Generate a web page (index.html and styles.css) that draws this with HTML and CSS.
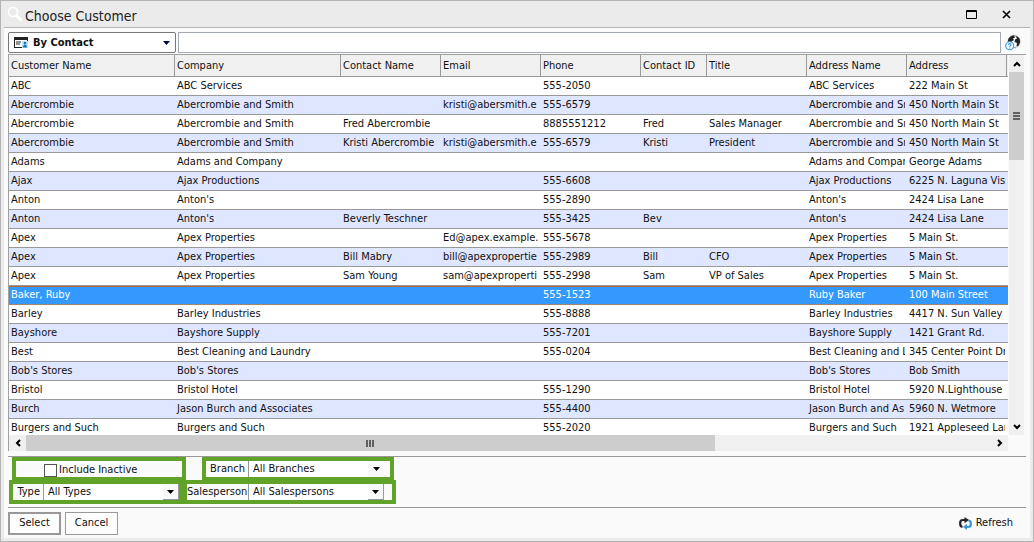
FILE: index.html
```html
<!DOCTYPE html>
<html lang="en">
<head>
<meta charset="utf-8">
<title>Choose Customer</title>
<link rel="stylesheet" href="styles.css">
</head>
<body>
<div class="window">
  <header class="titlebar">
    <svg class="title-icon" viewBox="0 0 16 16" width="16" height="16" aria-hidden="true"><circle cx="6" cy="6" r="4.5" fill="none" stroke="#fff" stroke-width="1.6"/><path d="M9.5 9.5L14 14" stroke="#fff" stroke-width="2.6" stroke-linecap="round"/></svg>
    <h1 class="title">Choose Customer</h1>
    <button class="win-btn" aria-label="Maximize"><svg viewBox="0 0 11 9" width="11" height="9"><path d="M0.5 0.5h10v8h-10zM0 1.5h11" fill="none" stroke="#000"/></svg></button>
    <button class="win-btn" aria-label="Close"><svg viewBox="0 0 9 9" width="9" height="9"><path d="M1 1l7 7M8 1l-7 7" stroke="#000" stroke-width="1.6"/></svg></button>
  </header>
  <main class="content">
    <div class="toolbar">
      <div class="mode">
        <svg class="mode-icon" viewBox="0 0 14 11" width="14" height="11" aria-hidden="true"><path d="M0 0h14v11H0z" fill="#222"/><path d="M1 3h12v7H1z" fill="#fff"/><path d="M2 5h5M2 7h4" stroke="#222"/><path d="M8 4h6v7H8z" fill="#bfe0f5"/><circle cx="11" cy="6" r="1.3" fill="#1b75b8"/><path d="M9 10.5c0-4 4-4 4 0z" fill="#1b75b8"/></svg>
        <select class="mode-select" aria-label="Search mode"><option>By Contact</option></select>
        <svg class="arrow" viewBox="0 0 7 4" width="7" height="4" aria-hidden="true"><path d="M0 0h7L3.5 4z" fill="#000050"/></svg>
      </div>
      <input class="search" type="text" aria-label="Search">
      <button class="globe" aria-label="Web help"><svg viewBox="0 0 16 16" width="16" height="16"><circle cx="9" cy="6.500" r="6" fill="#fff" stroke="#999"/><path d="M3 6.500C3 3 6 .5 9 .6L10 2.500 8 3.500l1 1.500-2.500 1.500L7 8.500 4.500 8zM10.500 1c3 .6 5 3 4.500 6.500L13 11.500l-1.500-1L12 8 9.500 7 10 4.500l2-1z" fill="#222"/><circle cx="4.700" cy="10.800" r="4" fill="#eef8fe" stroke="#3f9bd8" stroke-width="1.100"/><path d="M3.300 10c0-2 3-1.700 2.700 0-.2.900-1.300.8-1.300 1.800M4.700 12.400v1" fill="none" stroke="#3f9bd8" stroke-width="1.100"/></svg></button>
    </div>

    <div class="grid">
      <div class="viewport">
        <table class="customers">
          <colgroup><col class="c-wide"><col class="c-wide"><col class="c-mid"><col class="c-mid"><col class="c-mid"><col class="c-id"><col class="c-mid"><col class="c-mid"><col class="c-mid"><col></colgroup>
          <thead><tr><th>Customer Name</th><th>Company</th><th>Contact Name</th><th>Email</th><th>Phone</th><th>Contact ID</th><th>Title</th><th>Address Name</th><th>Address</th><th></th></tr></thead>
          <tbody>
            <tr><td>ABC</td><td>ABC Services</td><td></td><td></td><td>555-2050</td><td></td><td></td><td>ABC Services</td><td>222 Main St</td><td></td></tr>
            <tr><td>Abercrombie</td><td>Abercrombie and Smith</td><td></td><td>kristi@abersmith.e</td><td>555-6579</td><td></td><td></td><td>Abercrombie and Sm</td><td>450 North Main St</td><td></td></tr>
            <tr><td>Abercrombie</td><td>Abercrombie and Smith</td><td>Fred Abercrombie</td><td></td><td>8885551212</td><td>Fred</td><td>Sales Manager</td><td>Abercrombie and Sm</td><td>450 North Main St</td><td></td></tr>
            <tr><td>Abercrombie</td><td>Abercrombie and Smith</td><td>Kristi Abercrombie</td><td>kristi@abersmith.e</td><td>555-6579</td><td>Kristi</td><td>President</td><td>Abercrombie and Sm</td><td>450 North Main St</td><td></td></tr>
            <tr><td>Adams</td><td>Adams and Company</td><td></td><td></td><td></td><td></td><td></td><td>Adams and Compan</td><td>George Adams</td><td></td></tr>
            <tr><td>Ajax</td><td>Ajax Productions</td><td></td><td></td><td>555-6608</td><td></td><td></td><td>Ajax Productions</td><td>6225 N. Laguna Vist</td><td></td></tr>
            <tr><td>Anton</td><td>Anton's</td><td></td><td></td><td>555-2890</td><td></td><td></td><td>Anton's</td><td>2424 Lisa Lane</td><td></td></tr>
            <tr><td>Anton</td><td>Anton's</td><td>Beverly Teschner</td><td></td><td>555-3425</td><td>Bev</td><td></td><td>Anton's</td><td>2424 Lisa Lane</td><td></td></tr>
            <tr><td>Apex</td><td>Apex Properties</td><td></td><td>Ed@apex.example.</td><td>555-5678</td><td></td><td></td><td>Apex Properties</td><td>5 Main St.</td><td></td></tr>
            <tr><td>Apex</td><td>Apex Properties</td><td>Bill Mabry</td><td>bill@apexpropertie</td><td>555-2989</td><td>Bill</td><td>CFO</td><td>Apex Properties</td><td>5 Main St.</td><td></td></tr>
            <tr><td>Apex</td><td>Apex Properties</td><td>Sam Young</td><td>sam@apexproperti</td><td>555-2998</td><td>Sam</td><td>VP of Sales</td><td>Apex Properties</td><td>5 Main St.</td><td></td></tr>
            <tr class="selected"><td>Baker, Ruby</td><td></td><td></td><td></td><td>555-1523</td><td></td><td></td><td>Ruby Baker</td><td>100 Main Street</td><td></td></tr>
            <tr><td>Barley</td><td>Barley Industries</td><td></td><td></td><td>555-8888</td><td></td><td></td><td>Barley Industries</td><td>4417 N. Sun Valley</td><td></td></tr>
            <tr><td>Bayshore</td><td>Bayshore Supply</td><td></td><td></td><td>555-7201</td><td></td><td></td><td>Bayshore Supply</td><td>1421 Grant Rd.</td><td></td></tr>
            <tr><td>Best</td><td>Best Cleaning and Laundry</td><td></td><td></td><td>555-0204</td><td></td><td></td><td>Best Cleaning and L</td><td>345 Center Point Dr</td><td></td></tr>
            <tr><td>Bob's Stores</td><td>Bob's Stores</td><td></td><td></td><td></td><td></td><td></td><td>Bob's Stores</td><td>Bob Smith</td><td></td></tr>
            <tr><td>Bristol</td><td>Bristol Hotel</td><td></td><td></td><td>555-1290</td><td></td><td></td><td>Bristol Hotel</td><td>5920 N.Lighthouse</td><td></td></tr>
            <tr><td>Burch</td><td>Jason Burch and Associates</td><td></td><td></td><td>555-4400</td><td></td><td></td><td>Jason Burch and As</td><td>5960 N. Wetmore</td><td></td></tr>
            <tr><td>Burgers and Such</td><td>Burgers and Such</td><td></td><td></td><td>555-2020</td><td></td><td></td><td>Burgers and Such</td><td>1921 Appleseed Lan</td><td></td></tr>
          </tbody>
        </table>
      </div>
      <div class="vscroll" aria-hidden="true">
        <span class="sb-btn"><svg viewBox="0 0 8 6" width="8" height="6"><path d="M1 5l3-3 3 3" fill="none" stroke="#000" stroke-width="2"/></svg></span>
        <span class="v-thumb"><svg viewBox="0 0 7 8" width="7" height="8"><path d="M0 1h7M0 4h7M0 7h7" stroke="#606060" stroke-width="2"/></svg></span>
        <span class="v-rest"></span>
        <span class="sb-btn"><svg viewBox="0 0 8 6" width="8" height="6"><path d="M1 1l3 3 3-3" fill="none" stroke="#000" stroke-width="2"/></svg></span>
      </div>
      <div class="hscroll" aria-hidden="true">
        <span class="sb-btn"><svg viewBox="0 0 6 8" width="6" height="8"><path d="M5 1L2 4l3 3" fill="none" stroke="#000" stroke-width="2"/></svg></span>
        <span class="h-thumb"><svg viewBox="0 0 8 7" width="8" height="7"><path d="M1 0v7M4 0v7M7 0v7" stroke="#606060" stroke-width="2"/></svg></span>
        <span class="h-rest"></span>
        <span class="sb-btn"><svg viewBox="0 0 6 8" width="6" height="8"><path d="M1 1l3 3-3 3" fill="none" stroke="#000" stroke-width="2"/></svg></span>
      </div>
    </div>

    <section class="filters">
      <div class="filter-row first">
        <div class="mark inactive"><input class="check" type="checkbox" id="inactive"><label for="inactive">Include Inactive</label></div>
        <div class="mark branch"><label class="name" for="branch">Branch</label>
          <div class="combo"><select id="branch"><option>All Branches</option></select><span class="drop"><svg viewBox="0 0 7 4" width="7" height="4"><path d="M0 0h7L3.500 4z"/></svg></span></div></div>
      </div>
      <div class="filter-row second">
        <div class="mark type"><label class="name" for="type">Type</label>
          <div class="combo"><select id="type"><option>All Types</option></select><span class="drop raised"><svg viewBox="0 0 7 4" width="7" height="4"><path d="M0 0h7L3.500 4z"/></svg></span></div></div>
        <div class="mark sales"><label class="name" for="sales">Salesperson</label>
          <div class="combo"><select id="sales"><option>All Salespersons</option></select><span class="drop raised"><svg viewBox="0 0 7 4" width="7" height="4"><path d="M0 0h7L3.500 4z"/></svg></span></div></div>
      </div>
    </section>

    <footer class="actions">
      <button class="btn default">Select</button>
      <button class="btn">Cancel</button>
      <button class="refresh"><svg viewBox="0 0 13 13" width="13" height="13" aria-hidden="true"><path d="M3.500 10Q1.200 9.500 1.200 7V5.500Q1.200 3 4 3H7" fill="none" stroke="#222" stroke-width="2.200"/><path d="M5.500 0L10 3 5.500 6.200z" fill="#222"/><path d="M9.500 3.500Q11.800 4 11.800 6V7.500Q11.800 10 9 10H7" fill="none" stroke="#3796d2" stroke-width="2.200"/><path d="M8 6.800L4 10l4 3z" fill="#3796d2"/></svg>Refresh</button>
    </footer>
  </main>
</div>
</body>
</html>
```
FILE: styles.css
```css
* { box-sizing: border-box; }

body {
  margin: 0;
  font: 11px/14px "DejaVu Sans Condensed", Tahoma, "DejaVu Sans", sans-serif;
  color: #111;
}

button, input, select { font: inherit; color: inherit; margin: 0; }
svg { display: block; }

.window {
  min-height: 100vh;
  display: flex;
  flex-direction: column;
  background: #ebebeb;
  border: 1px solid #b4b4b4;
  padding: 0 3px 3px;
}

.titlebar {
  display: flex;
  align-items: center;
  height: 27px;
  border-bottom: 1px solid #b4b4b4;
  padding: 0 6px 0 3px;
}
.title {
  flex: 1;
  margin: 4px 0 0 2px;
  font: 14px/18px "DejaVu Sans Condensed", Tahoma, sans-serif;
  color: #222;
}
.win-btn {
  width: 35px;
  height: 24px;
  padding: 0;
  border: 0;
  background: none;
  display: flex;
  align-items: center;
  justify-content: center;
}

.content {
  flex: 1;
  display: flex;
  flex-direction: column;
  background: #fafafa;
  padding: 4px 4px 0;
}

.toolbar {
  display: flex;
  gap: 2px;
  height: 21px;
}
.mode {
  display: grid;
  grid-template-columns: 19px 1fr 12px;
  align-items: center;
  width: 168px;
  border: 1px solid #777;
  border-radius: 2px;
  background: #fff;
  padding-left: 5px;
}
.mode-icon { grid-area: 1 / 1; }
.mode .arrow { grid-area: 1 / 3; }
.mode-select {
  appearance: none;
  grid-area: 1 / 2;
  border: 0;
  background: none;
  padding: 0;
  font-weight: bold;
}
.search {
  flex: 1;
  min-width: 0;
  border: 1px solid #a3a9b3;
  background: #fff;
  padding: 0 4px;
}
.globe {
  width: 23px;
  padding: 0 0 0 2px;
  border: 0;
  background: none;
}

.grid {
  flex: 1 0 0;
  min-height: 0;
  margin-top: 1px;
  display: grid;
  grid-template-columns: minmax(0, 1fr) 18px;
  grid-template-rows: minmax(0, 1fr) 16px;
  border: 1px solid #a0a0a0;
  border-width: 1px 0 0 1px;
}
.viewport { overflow: hidden; background: #fff; height: 380px; }

.customers {
  width: 100%;
  table-layout: fixed;
  border-collapse: separate;
  border-spacing: 0;
}
.c-wide { width: 166px; }
.c-mid { width: 100px; }
.c-id { width: 66px; }
.customers th {
  height: 22px;
  padding: 0 2px;
  text-align: left;
  font-weight: normal;
  background: #f0f0f0;
  border: 1px solid #999;
  border-width: 0 1px 1px 0;
  white-space: nowrap;
}
.customers th:last-child { border-right: 0; padding: 0; }
.customers td {
  height: 19px;
  padding: 0 0 2px 2px;
  border-right: 2px solid transparent;
  overflow: hidden;
  white-space: nowrap;
}
.customers td:last-child { padding: 0; border: 0; }
.customers tbody tr { background: linear-gradient(#999, #999) bottom / 100% 1px no-repeat #fff; }
.customers tbody tr:nth-child(even) { background-color: #dfe6ff; }
.customers tbody tr.selected {
  background:
    linear-gradient(#b5692e, #b5692e) top / 100% 1px no-repeat,
    linear-gradient(#a88468, #a88468) bottom / 100% 1px no-repeat,
    #39f;
  color: #fff;
}

.sb-btn {
  display: flex;
  align-items: center;
  justify-content: center;
  flex: 0 0 17px;
}
.vscroll { display: flex; flex-direction: column; background: #f0f0f0; margin: 0 2px 0 1px; }
.v-thumb, .h-thumb {
  display: flex;
  align-items: center;
  justify-content: center;
  background: #cdcdcd;
}
.v-thumb { flex: 88 0 0; }
.v-rest { flex: 257 0 0; }
.hscroll { display: flex; background: #f0f0f0; }
.h-thumb { flex: 688 0 0; }
.h-rest { flex: 276 0 0; }

.filters {
  margin-top: 5px;
  height: 52px;
  border: 1px solid #999;
  border-width: 1px 0;
}
.filter-row { display: flex; height: 24px; }
.first { margin: 0 0 0 4px; gap: 16px; }
.second { margin: -1px 0 0 1px; }
.mark {
  display: flex;
  align-items: center;
  border: 4px solid #61a229;
}
.inactive { width: 174px; padding: 2px 0 0 28px; gap: 2px; }
.branch { width: 192px; }
.type { width: 174px; }
.sales { width: 213px; }
.check {
  appearance: none;
  width: 13px;
  height: 13px;
  border: 1px solid #555;
  background: #fff;
}
.name { text-align: right; padding-right: 3px; }
.branch .name { width: 42px; }
.type .name { width: 30px; }
.sales .name { width: 61px; padding-right: 2px; white-space: nowrap; }
.combo {
  display: grid;
  grid-template-columns: 1fr 16px;
  width: 136px;
  height: 16px;
  border-left: 1px solid #999;
  background: #fff;
}
.combo select {
  appearance: none;
  grid-area: 1 / 1;
  min-width: 0;
  border: 0;
  padding: 0 0 0 4px;
  background: none;
}
.drop {
  display: flex;
  align-items: center;
  justify-content: center;
  background: #f8f8f8;
}
.raised { border: 1px solid #999; border-width: 0 1px 1px 0; }

.actions {
  display: flex;
  align-items: center;
  gap: 4px;
  height: 30px;
}
.btn {
  width: 53px;
  height: 23px;
  padding: 0;
  border: 1px solid #999;
  background: #fdfdfd;
}
.default { border-width: 2px; }
.refresh {
  display: flex;
  align-items: center;
  gap: 4px;
  margin-left: auto;
  margin-right: 13px;
  padding: 0;
  border: 0;
  background: none;
}
```
